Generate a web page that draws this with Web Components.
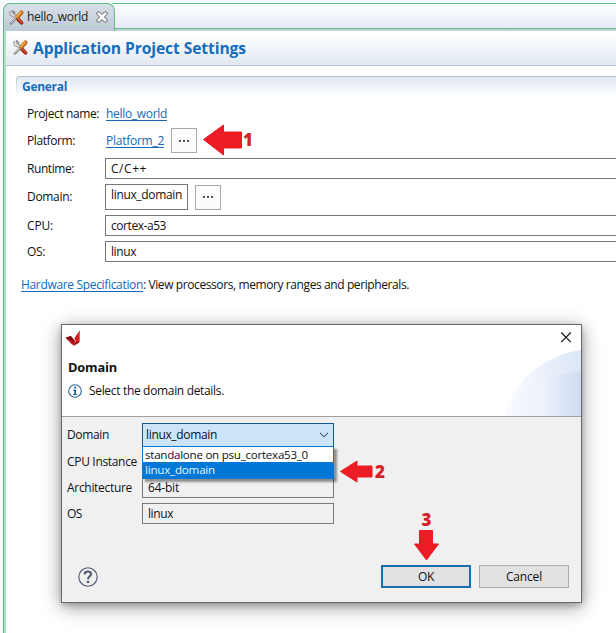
<!DOCTYPE html>
<html lang="en"><head><meta charset="utf-8"><title>Application Project Settings</title>
<style>
html,body{margin:0;width:616px;height:633px;overflow:hidden;background:#fff}
body{font:12px/16px "Open Sans","Noto Sans",sans-serif;color:#111}
</style></head><body>
<settings-page></settings-page>
<script>
const define=(name,html,after)=>{
  const t=document.createElement('template');t.innerHTML=html;
  customElements.define(name,class extends HTMLElement{
    constructor(){super();this.attachShadow({mode:'open'}).append(t.content.cloneNode(true));}
    connectedCallback(){if(after)after(this,this.shadowRoot);}
  });
};

/* Single line of text tracked to an exact width (w). */
define('ui-text',`<style>:host{display:block;white-space:nowrap}span{display:inline-block}:host([link]) span{text-decoration:underline;text-underline-offset:2px;text-decoration-thickness:1px;text-decoration-skip-ink:none}</style><span><slot></slot></span>`,(el,r)=>{
  const s=r.querySelector('span'),w=+el.getAttribute('w');
  s.style.letterSpacing='0';
  const n=el.textContent.length;
  s.style.letterSpacing=((w-s.getBoundingClientRect().width)/n)+'px';
});

define('tools-icon',`<style>:host{display:block;width:15px;height:15px}svg{display:block}</style>
<svg width="15" height="15" viewBox="0 0 15 15" fill="none" stroke-linecap="round">
<path d="M3.6 4.6 8.8 9.2" stroke="#999" stroke-width="3"/><path d="M1.2 2.2 1.8 5.2 4.8 5.8 5.6 3 3.6 1" stroke="#8b8d8f" stroke-width="1.9"/><path d="M1.6 3 2.4 4.9 4.6 4.8M4 5l4 3.6" stroke="#f4f4f2" stroke-width="1.2"/>
<path d="M8.8 9 12.4 12.8" stroke="#9e2418" stroke-width="3.8"/><path d="M9 8.8 12.6 12.4" stroke="#d94c35" stroke-width="1.6"/>
<path d="M1.8 13.6 7 8.6" stroke="#777" stroke-width="2.2"/><path d="M2 13.2 6.8 8.6" stroke="#eee" stroke-width="1"/>
<path d="M8.4 7 12.4 2.6" stroke="#b9681c" stroke-width="4.2"/><path d="M8 6.6 12 2.2" stroke="#f2a545" stroke-width="2"/></svg>`);

define('editor-tab',`<style>:host{display:flex;height:31px;box-sizing:border-box;padding:3px 0 0 3px;background:#f8fafc}
.tab{position:relative;z-index:1;box-sizing:border-box;width:112px;height:28px;border:1px solid #62bd82;border-bottom:0;border-radius:7px 8px 0 0;background:linear-gradient(#d9e1e9,#bdc9d7);display:flex;align-items:center;padding:0 0 1px 5px;color:#222}
.rest{flex:1;box-sizing:border-box;height:28px;border-top:1px solid #62bd82;background:linear-gradient(#fff,#e5ecf8 23px,#e5ecf8 24px,#62bd82 24px,#62bd82 25px,#c3cfdd 25px);margin-left:-3px}
ui-text{margin-left:3px;width:69px}</style>
<div class="tab"><tools-icon></tools-icon><ui-text w="61">hello_world</ui-text>
<svg width="12" height="12" viewBox="0 0 12 12"><path d="M1 1.5 1.5 1H3.7L6 3.6 8.3 1h2.2l.5.5v1.8L8.5 6 11 8.7v1.8l-.5.5H8.3L6 8.4 3.7 11H1.5L1 10.5V8.7L3.5 6 1 3.3Z" fill="#fff" stroke="#555" stroke-width=".9"/></svg></div><div class="rest"></div>`);

define('form-header',`<style>:host{display:flex;align-items:center;height:35px;box-sizing:border-box;padding:0 0 1px 7px;background:linear-gradient(#fff 10%,#e1e8f2);border-bottom:1px solid #b4c4d0;color:#166dbd;font-weight:700;font-size:15.6px}
ui-text{margin-left:5px}</style><tools-icon></tools-icon><ui-text w="213">Application Project Settings</ui-text>`);

define('form-section',`<style>:host{display:block;margin:10px 0 0 10px}
.h{height:21px;box-sizing:border-box;border-top:1px solid #b4c5d1;border-radius:4px 0 0 0;background:linear-gradient(#b4c5d1,#fff) left/1px 100% no-repeat,linear-gradient(#dfe7f1,#fff);padding:2px 0 0 6px;color:#166dbd;font-weight:700}</style>
<div class="h"><ui-text w="45">General</ui-text></div><slot></slot>`);

define('form-row',`<style>:host{display:flex;align-items:center;box-sizing:border-box;height:var(--h);margin-top:var(--gap,0)}
.l{width:var(--lw,78px);flex:none}.c{flex:1;display:flex;align-items:center;min-width:0}</style><div class="l"><slot name="label"></slot></div><div class="c"><slot></slot></div>`);

define('text-box',`<style>:host{display:flex;align-items:center;box-sizing:border-box;height:21px;flex:1;border:1px solid #777;padding:1px 0 0 5px}:host([open]){border-right:0}</style><slot></slot>`);

define('more-button',`<style>:host{display:flex;align-items:center;justify-content:center;gap:2px;box-sizing:border-box;width:26px;height:25px;border:1px solid #a8a8a8;background:#fcfcfc}i{width:2px;height:2px;background:#555}</style><i></i><i></i><i></i>`);

define('link-text',`<style>:host{display:block;color:#1768b8}</style><slot></slot>`);

define('step-arrow',`<style>:host{display:flex;align-items:center;color:#d3202b;font:700 17px/18px "Open Sans",sans-serif}:host([down]){flex-direction:column-reverse}svg{display:block}</style><svg></svg><b><slot></slot></b>`,(el,r)=>{
  const s=r.querySelector('svg'),w=el.getAttribute('w'),h=el.getAttribute('h');
  s.setAttribute('width',w);s.setAttribute('height',h);s.setAttribute('viewBox',`0 0 ${w} ${h}`);
  s.innerHTML=`<path d="${el.getAttribute('d')}" fill="#eb1c24" stroke="#eb1c24" stroke-linejoin="round"/>`;
});

define('push-button',`<style>:host{display:flex;align-items:center;justify-content:center;box-sizing:border-box;width:90px;height:23px;background:#e1e1e1;border:1px solid #adadad}:host([primary]){border:2px solid #176fae}</style><slot></slot>`);

define('combo-list',`<style>:host{display:block;box-sizing:border-box;position:absolute;z-index:2;left:0;top:23px;width:192px;border:1px solid #0878d4;background:#fff;box-shadow:3px 3px 2px #0006;font-size:11.6px;line-height:15px}
div{height:15px;padding-left:2px}.s{background:#0078d7;color:#e8f4ff;height:16px}</style>
<div><ui-text w="163">standalone on psu_cortexa53_0</ui-text></div><div class="s"><ui-text w="70">linux_domain</ui-text></div>`);

define('combo-box',`<style>:host{display:flex;position:relative;align-items:center;box-sizing:border-box;width:192px;height:24px;background:#cce4f7;border:1px solid #17598c;padding:0 4px 1px 3px;justify-content:space-between}combo-list{margin-left:-1px;margin-top:-1px}</style>
<ui-text w="71">linux_domain</ui-text><svg width="10" height="6" viewBox="0 0 10 6"><path d="M1 .8 5 4.8 9 .8" fill="none" stroke="#4b5660" stroke-width="1.1"/></svg><combo-list></combo-list>`);

define('domain-dialog',`<style>
:host{display:flex;flex-direction:column;position:absolute;left:61px;top:324px;width:521px;height:279px;box-sizing:border-box;border:1px solid #686868;background:#f0f0f0;box-shadow:0 4px 18px #0006,0 2px 6px #0003}
header{height:92px;box-sizing:border-box;background:#fff;border-bottom:1px solid #a0a0a0;position:relative}
.bar{display:flex;justify-content:space-between;padding:5px 9px 0 3px;height:25px;box-sizing:border-box}
.t{font-weight:700;font-size:12.8px;padding:9px 0 0 6px;height:24px;box-sizing:border-box}.t ui-text{line-height:16px}
.m{display:flex;align-items:center;padding:9px 0 0 6px}.m ui-text{margin-left:7px}
.swoosh{position:absolute;right:0;bottom:0}
main{padding:6px 0 0 5px;flex:1}
form-row{--lw:75px}.f{flex:none;width:192px;border-color:#7a7a7a;background:#f0f0f0}
footer{display:flex;align-items:center;padding:0 12px 14px 16px;gap:8px}.sp{flex:1}
</style>
<header><svg class="swoosh" width="76" height="67" viewBox="0 0 76 67"><defs><linearGradient id="a"><stop stop-color="#fbfcfe"/><stop offset="1" stop-color="#dce6f7"/></linearGradient><linearGradient id="b"><stop stop-color="#f8faff"/><stop offset=".5" stop-color="#ecf1fb"/><stop offset="1" stop-color="#d0dcf3"/></linearGradient></defs><path d="M0 67C5 33 42 5 76 1V67Z" fill="url(#a)"/><path d="M0 67C5 44 47 26 76 22V67Z" fill="url(#b)"/></svg>
<div class="bar"><svg width="17" height="17" viewBox="0 0 17 17"><path d="M.5 7.8 5.8 6 10.8 12 9 15.8 5.5 13Z" fill="#b71518"/><path d="M.5 7.8 5.8 6 10 11.4Z" fill="#7c0b10"/><path d="M9.3 8.2 14.8.2 14.6 12 9 15.8 11 12Z" fill="#d71e20"/><path d="M9 15.8 11 12 14.6 12Z" fill="#8e0d12"/></svg>
<svg width="12" height="15" viewBox="0 0 12 15"><path d="M1.2 2.5 10.8 12.1M10.8 2.5 1.2 12.1" stroke="#111" stroke-width="1.1"/></svg></div>
<div class="t"><ui-text w="49">Domain</ui-text></div>
<div class="m"><svg width="14" height="14" viewBox="0 0 14 14"><circle cx="7" cy="7" r="6.3" fill="#fff" stroke="#2c679b" stroke-width="1.1"/><path d="M6 2.8h2v1.7H6ZM5 5.7h3v4.2h1.1v1H5v-1h1.2V6.7H5Z" fill="#20639b"/></svg><ui-text w="135">Select the domain details.</ui-text></div></header>
<main>
<form-row style="--h:24px"><ui-text slot="label" w="42">Domain</ui-text><combo-box></combo-box></form-row>
<form-row style="--h:21px;--gap:4px"><ui-text slot="label" w="70">CPU Instance</ui-text></form-row>
<form-row style="--h:21px;--gap:5px"><ui-text slot="label" w="65">Architecture</ui-text><text-box class="f"><ui-text w="31">64-bit</ui-text></text-box></form-row>
<form-row style="--h:21px;--gap:5px"><ui-text slot="label" w="15">OS</ui-text><text-box class="f"><ui-text w="25">linux</ui-text></text-box></form-row>
</main>
<footer><svg width="20" height="20" viewBox="0 0 20 20" fill="none" stroke="#4d5b72"><circle cx="10" cy="10" r="9.2" stroke-width="1.1"/><path d="M6.6 7.4C6.8 3.3 13.4 3.7 13 7.3 12.7 9.4 10 9.4 10 12.3" stroke-width="2.1"/><path d="M8.8 14.9h2.4" stroke-width="2.2"/></svg><span class="sp"></span>
<push-button primary><ui-text w="16">OK</ui-text></push-button><push-button><ui-text w="36">Cancel</ui-text></push-button></footer>`);

define('settings-page',`<style>
:host{display:block;position:relative;width:616px;height:633px;overflow:hidden;background:#f8fafc}
.body{margin-left:3px;height:602px;border-left:1px solid #5fb983;box-sizing:border-box}
.in{border-left:2px solid #b3dfc5;background:#fff;height:602px}
.rows{padding-left:11px}.r{padding:15px 0 0 5px;display:flex}
.two{position:absolute;left:340px;top:460px;gap:2px}.three{position:absolute;left:414px;top:511px}
.sm{flex:none;width:83px;height:26px;padding-top:0;padding-bottom:4px}
</style>
<editor-tab></editor-tab>
<div class="body"><div class="in"><form-header></form-header>
<form-section><div class="rows">
<form-row style="--h:20px;--gap:7px"><ui-text slot="label" w="72">Project name:</ui-text><link-text style="margin-left:1px"><ui-text link w="61">hello_world</ui-text></link-text></form-row>
<form-row style="--h:25px;--gap:4px"><ui-text slot="label" w="48">Platform:</ui-text><link-text style="margin-left:1px"><ui-text link w="58">Platform_2</ui-text></link-text><more-button style="margin-left:7px"></more-button><step-arrow style="margin:-2px 0 0 6px;gap:1px" w="39" h="32" d="M.5 15.5 20.5 1V8H38.5V24H20.5V31Z">1</step-arrow></form-row>
<form-row style="--h:21px;--gap:5px"><ui-text slot="label" w="47">Runtime:</ui-text><text-box open><ui-text w="36">C/C++</ui-text></text-box></form-row>
<form-row style="--h:26px;--gap:5px"><ui-text slot="label" w="45">Domain:</ui-text><text-box class="sm"><ui-text w="71">linux_domain</ui-text></text-box><more-button style="margin-left:7px"></more-button></form-row>
<form-row style="--h:21px;--gap:5px"><ui-text slot="label" w="26">CPU:</ui-text><text-box open><ui-text w="55">cortex-a53</ui-text></text-box></form-row>
<form-row style="--h:21px;--gap:5px"><ui-text slot="label" w="18">OS:</ui-text><text-box open><ui-text w="25">linux</ui-text></text-box></form-row>
</div><div class="r"><link-text><ui-text link w="122">Hardware Specification</ui-text></link-text><ui-text w="266">: View processors, memory ranges and peripherals.</ui-text></div></form-section>
</div></div>
<domain-dialog></domain-dialog>
<step-arrow class="two" w="33" h="23" d="M.5 11.5 17 1V6H32V17H17V22Z">2</step-arrow>
<step-arrow class="three" down w="25" h="32" d="M5.5 1.5H18.5V15H24.5L12.5 31 .5 15H5.5Z">3</step-arrow>`);
</script></body></html>
